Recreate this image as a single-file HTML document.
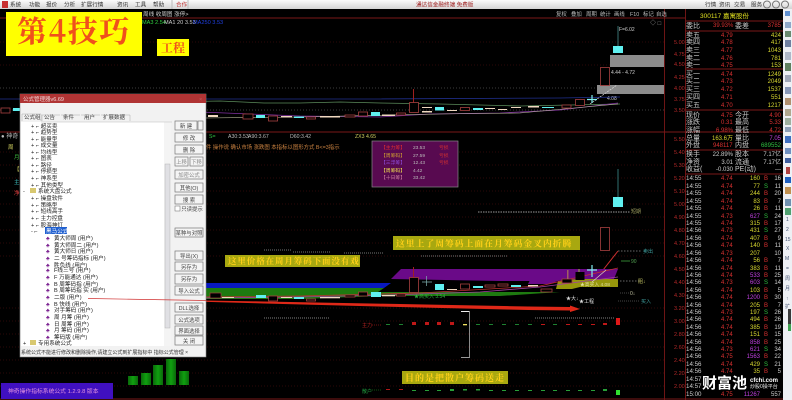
<!DOCTYPE html>
<html lang="zh"><head><meta charset="utf-8"><title>第4技巧</title>
<style>
html,body{margin:0;padding:0;background:#000;width:792px;height:400px;overflow:hidden}
svg{display:block;filter:blur(.35px);font-family:"Liberation Sans","Noto Sans CJK SC",sans-serif;font-size:7px}
.btn{fill:#f4f4f4;stroke:#777;stroke-width:.7}
.grid line{stroke:#5a1010;stroke-width:.6;stroke-dasharray:1 2}
.hollow{fill:#000;stroke:#a84040;stroke-width:.8}
.cy{fill:#60f0f0}
.pale{fill:#f0d8c0}
.se{font-family:"Noto Serif CJK SC",serif}
</style></head><body>
<svg width="792" height="400" viewBox="0 0 792 400" xmlns="http://www.w3.org/2000/svg">
<defs><linearGradient id="mb" x1="0" y1="0" x2="0" y2="1"><stop offset="0" stop-color="#fafafa"/><stop offset="1" stop-color="#d4d4d4"/></linearGradient>
<linearGradient id="gb" x1="0" y1="0" x2="1" y2="0"><stop offset="0" stop-color="#0a6a0a"/><stop offset=".5" stop-color="#10a010"/><stop offset="1" stop-color="#0a6a0a"/></linearGradient></defs>
<rect width="792" height="400" fill="#000"/>
<!-- menu -->
<rect width="792" height="9" fill="url(#mb)"/>
<rect x="2" y="1" width="6" height="7" fill="#c83030"/>
<g fill="#333" font-size="5.600"><text x="10" y="6.500">系统</text><text x="29" y="6.500">功能</text><text x="46" y="6.500">报价</text><text x="64" y="6.500">分析</text><text x="81" y="6.500">扩展行情</text><text x="117" y="6.500">资讯</text><text x="135" y="6.500">工具</text><text x="153" y="6.500">帮助</text></g>
<line x1="172" y1="0" x2="172" y2="9" stroke="#bbb"/><line x1="188" y1="0" x2="188" y2="9" stroke="#bbb"/><text x="176" y="6.500" fill="#c03030" font-size="5.600">合作</text>
<text x="416" y="6.500" fill="#a02020" font-size="5.600">通达信金融终端 免费版</text>
<g fill="#333" font-size="5.600"><text x="705" y="6.500">行情</text><text x="719" y="6.500">资讯</text><text x="734" y="6.500">交易</text><text x="751" y="6.500">服务</text></g>
<circle cx="767" cy="4.500" r="3.500" fill="none" stroke="#777"/><circle cx="776" cy="4.500" r="3.500" fill="none" stroke="#777"/><circle cx="785" cy="4.500" r="3.500" fill="none" stroke="#777"/>
<!-- grid -->
<g class="grid">
<line x1="0" y1="42" x2="664" y2="42"/><line x1="0" y1="65" x2="664" y2="65"/><line x1="0" y1="88" x2="664" y2="88" style="stroke:#777"/><line x1="0" y1="110" x2="664" y2="110" style="stroke:#777"/>
<line x1="0" y1="152" x2="664" y2="152"/><line x1="0" y1="165" x2="664" y2="165"/><line x1="0" y1="178" x2="664" y2="178"/><line x1="0" y1="191" x2="664" y2="191"/><line x1="0" y1="204" x2="664" y2="204"/><line x1="0" y1="217" x2="664" y2="217"/><line x1="0" y1="230" x2="664" y2="230"/><line x1="0" y1="243" x2="664" y2="243"/><line x1="0" y1="256" x2="664" y2="256"/>
<line x1="0" y1="308" x2="664" y2="308"/><line x1="0" y1="321" x2="664" y2="321"/><line x1="0" y1="334" x2="664" y2="334"/><line x1="0" y1="347" x2="664" y2="347"/><line x1="0" y1="360" x2="664" y2="360"/><line x1="0" y1="373" x2="664" y2="373"/><line x1="0" y1="386" x2="664" y2="386"/>
</g>
<!-- panel frame -->
<g stroke="#7a1818" stroke-width=".9" fill="none">
<line x1="0" y1="18" x2="685" y2="18"/><line x1="0" y1="132" x2="783" y2="132"/><line x1="0" y1="399" x2="783" y2="399"/>
<line x1="664.500" y1="9" x2="664.500" y2="400"/><line x1="685.500" y1="9" x2="685.500" y2="400"/>
<line x1="686" y1="21" x2="783" y2="21"/><line x1="686" y1="31" x2="783" y2="31"/><line x1="686" y1="69" x2="783" y2="69"/><line x1="686" y1="110" x2="783" y2="110"/><line x1="686" y1="150" x2="783" y2="150"/><line x1="686" y1="174" x2="783" y2="174"/>
</g>
<!-- top toolbar text -->
<text x="143" y="16" fill="#ccc" font-size="5.600">周线 收周图 涨停&gt;</text>
<g fill="#bbb" font-size="5.400"><text x="556" y="16">复权</text><text x="571" y="16">叠加</text><text x="586" y="16">周期</text><text x="600" y="16">统计</text><text x="614" y="16">画线</text><text x="630" y="16">F10</text><text x="643" y="16">标记</text><text x="656" y="16">自选</text></g>
<g font-size="5.600"><text x="142" y="24" fill="#30d040">MA3 2.54</text><text x="164" y="24" fill="#ccc">MA1 20 3.53</text><text x="193" y="24" fill="#2040e0">MA250 3.53</text></g>
<text x="650" y="25" fill="#999" font-size="6">◇ □</text>
<!-- price axes -->
<g fill="#b02828" font-size="5.500">
<text x="674" y="44">5.00</text><text x="674" y="56">4.75</text><text x="674" y="66">4.50</text><text x="674" y="79">4.25</text><text x="674" y="90">4.00</text><text x="674" y="101">3.75</text><text x="674" y="112">3.50</text>
<text x="674" y="141">5.50</text><text x="674" y="154">5.40</text><text x="674" y="167">5.30</text><text x="674" y="180">5.20</text><text x="674" y="193">5.10</text><text x="674" y="206">5.00</text><text x="674" y="219">4.90</text><text x="674" y="232">4.80</text><text x="674" y="245">4.70</text><text x="674" y="258">4.60</text><text x="674" y="271">4.50</text><text x="674" y="284">4.40</text><text x="674" y="297">4.30</text><text x="674" y="310">3.20</text><text x="674" y="323">3.00</text><text x="674" y="336">2.80</text><text x="674" y="349">2.60</text><text x="674" y="362">2.40</text><text x="674" y="375">2.20</text><text x="674" y="388">2.00</text>
</g>
<!-- top panel chart -->
<rect x="610" y="55" width="54" height="12" fill="#8c8c8c"/><rect x="597" y="85" width="67" height="9" fill="#8c8c8c"/>
<line x1="618" y1="26" x2="618" y2="46" stroke="#50a0a0" stroke-width=".7"/><rect x="613" y="46" width="10" height="7" class="cy"/>
<text x="619" y="31" fill="#ccc" font-size="5">F=6.02</text>
<rect x="600.500" y="67.500" width="9" height="18" class="hollow"/><text x="611" y="74" fill="#ccc" font-size="5">4.44 - 4.72</text>
<line x1="590" y1="104" x2="617" y2="85" stroke="#ddd" stroke-width=".7" stroke-dasharray="2 1"/>
<text x="607" y="100" fill="#ccc" font-size="5">4.08</text>
<polyline points="0,99 60,99 369,99 560,98 620,97" fill="none" stroke="#203090" stroke-width=".8"/>
<polyline points="100,103 220,101 264,103 300,103 340,102 380,103 440,104 520,106 620,104" fill="none" stroke="#5a8a5a" stroke-width=".8"/>
<polyline points="200,112 300,116 380,117 430,114 500,113 560,110 618,103" fill="none" stroke="#8030a0" stroke-width=".8"/>
<polyline points="206,118 300,117 440,114 520,113 618,104" fill="none" stroke="#c0c0a0" stroke-width=".6"/>
<rect x="1" y="108" width="9" height="5" class="hollow"/><rect x="13" y="108" width="8" height="3" class="cy"/>
<rect x="208" y="115" width="10" height="2" class="pale"/><rect x="243" y="114" width="10" height="5" class="hollow"/><rect x="256" y="115" width="9" height="3" class="cy"/>
<rect x="268.500" y="116" width="9" height="5" class="hollow"/><rect x="281" y="116" width="11" height="1.500" class="pale"/><rect x="294" y="116.500" width="10" height="1.500" class="cy"/><rect x="306.500" y="117" width="9" height="2" class="hollow"/>
<rect x="320" y="116" width="20" height="1.500" class="pale"/><rect x="345" y="115" width="10" height="2" class="hollow"/><rect x="358.500" y="112" width="9" height="4" class="hollow"/><rect x="371" y="112" width="9" height="4" class="cy"/><rect x="382" y="114.500" width="13" height="1.500" class="pale"/><rect x="396.500" y="113" width="9" height="2" class="hollow"/>
<line x1="413.500" y1="89" x2="413.500" y2="103" stroke="#a02020"/><rect x="409.500" y="102.500" width="9" height="10" class="hollow"/><rect x="422" y="111" width="10" height="1.500" class="pale"/>
<rect x="422" y="107" width="10" height="1" class="pale"/><rect x="435" y="107" width="9" height="3.500" class="cy"/><rect x="447" y="110" width="10" height="1" class="pale"/><rect x="460.500" y="107.500" width="9" height="3" class="hollow"/><rect x="473" y="108" width="10" height="2" class="cy"/><rect x="485" y="108" width="10" height="1" class="pale"/><rect x="498" y="109" width="9" height="1" class="pale"/><rect x="511" y="107" width="10" height="1" class="pale"/><rect x="528" y="106" width="11" height="1.500" class="pale"/><rect x="542" y="107" width="12" height="1" class="cy"/><rect x="562" y="105" width="9" height="3" class="hollow"/><rect x="575.500" y="99.500" width="9" height="6" class="hollow"/><path d="M592 95V103M587 99.500H597" stroke="#80f0f0" stroke-width="1.200" fill="none"/>
<!-- lower panel header -->
<text x="1" y="138" fill="#bbb" font-size="6">● 神奇</text>
<g font-size="5.200"><text x="209" y="138" fill="#30c040">S=</text><text x="228" y="138" fill="#bbb">A30:3.53</text><text x="248" y="138" fill="#bbb">A90:3.67</text><text x="290" y="138" fill="#bbb">D60:3.42</text><text x="355" y="138" fill="#d0d060">ZX3 4.65</text></g>
<g font-size="5.500"><text x="8" y="149" fill="#d0d060">周</text><text x="14" y="159" fill="#40c040">月</text><text x="14" y="171" fill="#d0d060">【</text><text x="14" y="184" fill="#40c0c0">主</text><text x="14" y="195" fill="#e04040">净</text></g>
<text x="206" y="149" fill="#c88040" font-size="5.400">件 操作说 确认市场 涨跌图 本指标以图形方式 B&lt;=3指示</text>
<!-- purple info box -->
<rect x="372" y="141" width="86" height="46" fill="#580a50" stroke="#888" stroke-width=".7"/>
<g font-size="4.800"><text x="381" y="149" fill="#e03030">【主力筹】</text><text x="413" y="149" fill="#bbb">23.53</text><text x="439" y="149" fill="#d03030">亏损</text>
<text x="381" y="157" fill="#d0a030">【周筹码】</text><text x="413" y="157" fill="#bbb">27.59</text><text x="439" y="157" fill="#d03030">亏损</text>
<text x="381" y="164" fill="#9050e0">【三浮筹】</text><text x="413" y="164" fill="#bbb">12.43</text><text x="439" y="164" fill="#d03030">亏损</text>
<text x="381" y="172" fill="#f0e050">【周筹码】</text><text x="413" y="172" fill="#bbb">4.42</text>
<text x="381" y="179" fill="#d080a0">【十日筹】</text><text x="413" y="179" fill="#bbb">33.42</text></g>
<!-- lower chart -->
<line x1="618" y1="169" x2="618" y2="197" stroke="#307070"/><rect x="613" y="197" width="10" height="10" class="cy"/>
<rect x="600.500" y="227.500" width="9" height="23" class="hollow"/>
<line x1="478" y1="212" x2="630" y2="212" stroke="#ccc" stroke-width=".7" stroke-dasharray="1.500 1"/><text x="631" y="213" fill="#a0a060" font-size="5">短期</text>
<path d="M264 250H292M293 252H330M344 253H384M421 256H460M460 256H508" stroke="#999" stroke-width=".7" stroke-dasharray="1 1" fill="none"/>
<line x1="618" y1="251" x2="642" y2="251" stroke="#ccc" stroke-width=".6" stroke-dasharray="1.500 1.500"/><text x="643" y="253" fill="#40a0a0" font-size="5">卖出</text>
<line x1="621" y1="261" x2="630" y2="261" stroke="#308030"/><text x="631" y="263" fill="#50a050" font-size="5">90</text>
<line x1="592" y1="284" x2="618" y2="251" stroke="#d03030" stroke-width="1"/>
<!-- colour bands -->
<path d="M200 283H391L384 288H200Z" fill="#0818c0"/>
<path d="M200 288H384L378 292H560L500 296H380L300 299H200Z" fill="#1e7a10"/>
<path d="M391 279L401 269H618L614 279H580L556 281H500Z" fill="#6a0a88"/>
<path d="M558 281L578 279H618V287H580L572 289H556Z" fill="#96960c"/>
<path d="M530 280H560L550 284H528Z" fill="#6a0a88"/>
<polyline points="200,298 300,297 390,295 480,292 540,287 618,277" fill="none" stroke="#a040a0" stroke-width=".8"/>
<polyline points="200,297 300,296 420,293 540,286 618,268" fill="none" stroke="#c03030" stroke-width=".7"/>
<rect x="210" y="293" width="11" height="5" fill="#000" stroke="#a84040" stroke-width=".7"/>
<rect x="222" y="297" width="12" height="1" class="pale"/><rect x="256" y="295" width="10" height="3" class="cy"/>
<rect x="268.500" y="296" width="9" height="5" class="hollow"/><rect x="281" y="297" width="11" height="1" class="pale"/><rect x="294" y="297" width="10" height="2" class="cy"/><rect x="306.500" y="299" width="9" height="2" class="hollow"/><rect x="320" y="297" width="20" height="1.300" class="pale"/><rect x="345" y="295" width="10" height="2" class="hollow"/><rect x="358.500" y="292" width="9" height="4" class="hollow"/><rect x="371" y="292" width="10" height="5" class="cy"/><rect x="382" y="295" width="13" height="1.300" class="pale"/><rect x="396.500" y="294" width="9" height="2" class="hollow"/>
<line x1="413.500" y1="267" x2="413.500" y2="278" stroke="#a02020"/><rect x="409.500" y="277.500" width="9" height="15" class="hollow"/>
<path d="M426.500 276V286M422 282H432" stroke="#80b0b0" stroke-width=".7" fill="none"/><rect x="435" y="284" width="9" height="6" class="cy"/><rect x="447" y="289" width="10" height="1" class="pale"/><rect x="460.500" y="284" width="9" height="5" class="hollow"/><rect x="473" y="286" width="10" height="2" class="cy"/><rect x="485" y="285" width="10" height="2" class="hollow"/><rect x="498" y="284" width="10" height="2" class="hollow"/><rect x="511" y="285" width="10" height="2" class="cy"/><rect x="528" y="285" width="10" height="1.500" class="pale"/><rect x="541" y="289" width="11" height="3" class="hollow"/><rect x="562" y="279" width="10" height="4" class="hollow"/><rect x="567" y="270" width="1.500" height="9" fill="#a06060"/><rect x="575.500" y="272" width="9" height="8" fill="#000"/><rect x="578" y="269" width="2" height="3" fill="#806060"/><path d="M592 265V277M587 270H597" stroke="#80f0f0" stroke-width="1.200" fill="none"/>
<line x1="592" y1="282" x2="606" y2="270" stroke="#e0e0c0" stroke-width=".6"/>
<text x="414" y="298" fill="#30b040" font-size="5">★高买入 3.54</text>
<text x="580" y="286" fill="#e0e0a0" font-size="4.800">★高买入 4.08</text>
<text x="566" y="300" fill="#ddd" font-size="5">★大↓</text><text x="579" y="303" fill="#ddd" font-size="5">★工程</text>
<line x1="620" y1="281" x2="640" y2="281" stroke="#ccc" stroke-width=".6" stroke-dasharray="1.500 1.500"/><text x="638" y="283" fill="#c0c060" font-size="5">阻↓</text>
<line x1="620" y1="293" x2="630" y2="293" stroke="#888" stroke-width=".6" stroke-dasharray="1 1"/><text x="630" y="295" fill="#c0c0a0" font-size="5">0↓</text>
<line x1="618" y1="301" x2="640" y2="301" stroke="#888" stroke-width=".6" stroke-dasharray="1 1"/><text x="641" y="303" fill="#40a0a0" font-size="5">买入</text>
<!-- red arrow -->
<path d="M88 298.500L264 301.500L400 304L528 306.500L570 307V305.500L580 309L570 312V310.500L528 310L400 307L264 303.500Z" fill="#e02818"/>
<!-- signal rows -->
<line x1="264" y1="318" x2="330" y2="318" stroke="#aaa" stroke-width=".8" stroke-dasharray="1 1"/>
<line x1="535" y1="318" x2="615" y2="318" stroke="#aaa" stroke-width=".7" stroke-dasharray="1 1"/>
<text x="362" y="327" fill="#b02020" font-size="5">主力</text><line x1="372" y1="325" x2="382" y2="325" stroke="#701010" stroke-dasharray="1 1"/>
<path d="M461 311.500H469.500V357.500H461" fill="none" stroke="#999" stroke-width=".9"/><line x1="461" y1="311.500" x2="469" y2="311.500" stroke="#eee"/>
<g fill="#1e8030"><rect x="386" y="324" width="4" height="1"/><rect x="399" y="324" width="4" height="1"/><rect x="476" y="324" width="4" height="1"/><rect x="489" y="324" width="4" height="1"/><rect x="502" y="324" width="4" height="1"/><rect x="515" y="324" width="4" height="1"/><rect x="528" y="324" width="4" height="1"/><rect x="553" y="324" width="4" height="1"/></g>
<g fill="#c01818"><rect x="412" y="322" width="4" height="3"/><rect x="425" y="322" width="4" height="3"/><rect x="437" y="322" width="4" height="3"/><rect x="450" y="322" width="4" height="3"/><rect x="541" y="324" width="4" height="1"/><rect x="566" y="324" width="4" height="1"/><rect x="578" y="324" width="4" height="1"/><rect x="591" y="324" width="4" height="1"/><rect x="603" y="323" width="4" height="2"/><rect x="616" y="318" width="4" height="7" fill="#e01818"/></g>
<rect x="463" y="324" width="4" height="1.300" fill="#f0e060"/>
<text x="362" y="393" fill="#20a040" font-size="5">散户</text><line x1="372" y1="390" x2="382" y2="390" stroke="#105010" stroke-dasharray="1 1"/>
<g fill="#b01818"><rect x="386" y="389" width="4" height="1"/><rect x="399" y="389" width="4" height="1"/></g>
<g fill="#28a038"><rect x="412" y="390" width="4" height="1"/><rect x="425" y="390" width="4" height="1"/><rect x="437" y="390" width="4" height="1"/><rect x="450" y="389" width="4" height="2"/><rect x="463" y="389" width="4" height="1.500"/><rect x="476" y="389" width="4" height="1.500"/><rect x="489" y="390" width="4" height="1"/><rect x="502" y="390" width="4" height="1"/><rect x="515" y="390" width="4" height="1"/><rect x="528" y="390" width="4" height="1"/><rect x="541" y="390" width="4" height="1"/><rect x="553" y="390" width="4" height="1"/><rect x="566" y="390" width="4" height="1"/><rect x="578" y="390" width="4" height="1"/><rect x="591" y="390" width="4" height="1"/><rect x="603" y="389" width="4" height="2"/><rect x="616" y="390" width="4" height="5" fill="#30e030"/></g>
<!-- yellow labels -->
<rect x="225" y="255" width="135" height="12" fill="#a8a810"/>
<text x="228" y="264" fill="#ffd018" font-size="8.500" font-weight="700" letter-spacing=".9" class="se">这里价格在周月筹码下面没有戏</text>
<rect x="393" y="236" width="187" height="14" fill="#a8a810"/>
<text x="396" y="246.500" fill="#ffd018" font-size="8.800" font-weight="700" letter-spacing="1" class="se">这里上了周筹码上面在月筹码金叉内折腾</text>
<rect x="402" y="371" width="106" height="13" fill="#a8a810"/>
<text x="405" y="381" fill="#ffd018" font-size="9" font-weight="700" letter-spacing="1" class="se">目的是把散户筹码送走</text>
<!-- yellow title -->
<rect x="6" y="12" width="136" height="44" fill="#ffff00"/>
<text x="17" y="42" fill="#f0501c" font-size="30" font-weight="700" class="se" letter-spacing="1.500">第4技巧</text>
<rect x="157" y="39" width="32" height="17" fill="#ffff00"/>
<text x="161" y="52" fill="#f0501c" font-size="12" font-weight="700" class="se">工程</text>
<!-- green bars -->
<rect x="128" y="376" width="10" height="9" fill="url(#gb)"/><rect x="141" y="373" width="10" height="12" fill="url(#gb)"/><rect x="153" y="365" width="10" height="20" fill="url(#gb)"/><rect x="166" y="359" width="10" height="26" fill="url(#gb)"/><rect x="179" y="371" width="10" height="14" fill="url(#gb)"/>
<!-- bottom left -->
<rect x="1" y="383" width="112" height="16" fill="#4010c0"/>
<text x="8" y="393" fill="#e090e0" font-size="5.800">神奇操作指标系统公式 1.2.9.8 版本</text>
<!-- right panel -->
<text x="700" y="18" fill="#e0e020" font-size="6.500">300117 嘉寓股份</text>
<g fill="#ccc" font-size="7"><text x="686" y="28">委比</text><text x="686" y="37">卖五</text><text x="686" y="44">卖四</text><text x="686" y="52">卖三</text><text x="686" y="60">卖二</text><text x="686" y="67">卖一</text><text x="686" y="76">买一</text><text x="686" y="83">买二</text><text x="686" y="91">买三</text><text x="686" y="99">买四</text><text x="686" y="107">买五</text><text x="686" y="117">现价</text><text x="686" y="124">涨跌</text><text x="686" y="132">涨幅</text><text x="686" y="140">总量</text><text x="686" y="147">外盘</text><text x="686" y="156">换手</text><text x="686" y="164">净资</text><text x="686" y="171">收益(</text>
<text x="735" y="28">委差</text><text x="735" y="117">今开</text><text x="735" y="124">最高</text><text x="735" y="132">最低</text><text x="735" y="140">量比</text><text x="735" y="147">内盘</text><text x="735" y="156">股本</text><text x="735" y="164">流通</text><text x="735" y="171">PE(动)</text></g>
<g fill="#d83030" font-size="6"><text x="713" y="27">39.93%</text><text x="721" y="37">4.79</text><text x="721" y="44">4.78</text><text x="721" y="52">4.77</text><text x="721" y="60">4.76</text><text x="721" y="67">4.75</text><text x="721" y="76">4.74</text><text x="721" y="83">4.73</text><text x="721" y="91">4.72</text><text x="721" y="99">4.71</text><text x="721" y="107">4.70</text><text x="721" y="117">4.75</text><text x="721" y="124">0.31</text><text x="716" y="132">6.98%</text><text x="713" y="147">948117</text>
<g text-anchor="end"><text x="781" y="27">3785</text><text x="781" y="117">4.90</text><text x="781" y="124">5.33</text><text x="781" y="132">4.72</text></g></g>
<g fill="#d8d830" font-size="6"><g text-anchor="end"><text x="781" y="37">424</text><text x="781" y="44">417</text><text x="781" y="52">1043</text><text x="781" y="60">781</text><text x="781" y="67">153</text><text x="781" y="76">1249</text><text x="781" y="83">2049</text><text x="781" y="91">1537</text><text x="781" y="99">551</text><text x="781" y="107">1217</text></g><text x="712" y="140">163.6万</text></g>
<g font-size="6" text-anchor="end"><text x="781" y="140" fill="#c040e0">7.05</text><text x="781" y="147" fill="#30c040">689552</text>
<g fill="#ccc"><text x="781" y="156">7.17亿</text><text x="781" y="164">7.17亿</text><text x="781" y="171">—</text><text x="733" y="156">22.89%</text><text x="733" y="164">3.01</text><text x="733" y="171">-0.030</text></g></g>
<!-- ticks -->
<g fill="#ccc" font-size="6.200">
<text x="686" y="180">14:55</text><text x="686" y="188">14:55</text><text x="686" y="195">14:55</text><text x="686" y="203">14:55</text><text x="686" y="210">14:55</text><text x="686" y="218">14:55</text><text x="686" y="225">14:55</text><text x="686" y="232">14:56</text><text x="686" y="240">14:56</text><text x="686" y="247">14:56</text><text x="686" y="255">14:56</text><text x="686" y="262">14:56</text><text x="686" y="270">14:56</text><text x="686" y="277">14:56</text><text x="686" y="284">14:56</text><text x="686" y="292">14:56</text><text x="686" y="299">14:56</text><text x="686" y="307">14:56</text><text x="686" y="314">14:56</text><text x="686" y="321">14:56</text><text x="686" y="329">14:56</text><text x="686" y="336">14:56</text><text x="686" y="344">14:56</text><text x="686" y="351">14:56</text><text x="686" y="358">14:56</text><text x="686" y="366">14:56</text><text x="686" y="373">14:56</text><text x="686" y="381">14:57</text><text x="686" y="388">14:57</text><text x="686" y="396">15:00</text>
</g>
<g fill="#d83030" font-size="6">
<text x="721" y="180">4.74</text><text x="721" y="188">4.74</text><text x="721" y="195">4.74</text><text x="721" y="203">4.74</text><text x="721" y="210">4.74</text><text x="721" y="218">4.73</text><text x="721" y="225">4.74</text><text x="721" y="232">4.73</text><text x="721" y="240">4.74</text><text x="721" y="247">4.74</text><text x="721" y="255">4.73</text><text x="721" y="262">4.74</text><text x="721" y="270">4.74</text><text x="721" y="277">4.74</text><text x="721" y="284">4.73</text><text x="721" y="292">4.74</text><text x="721" y="299">4.74</text><text x="721" y="307">4.74</text><text x="721" y="314">4.73</text><text x="721" y="321">4.74</text><text x="721" y="329">4.74</text><text x="721" y="336">4.74</text><text x="721" y="344">4.74</text><text x="721" y="351">4.73</text><text x="721" y="358">4.75</text><text x="721" y="366">4.74</text><text x="721" y="373">4.74</text><text x="721" y="396">4.75</text>
</g>
<g fill="#d8d830" font-size="6" text-anchor="end">
<text x="760" y="180">160</text><text x="760" y="188">77</text><text x="760" y="195">244</text><text x="760" y="203">83</text><text x="760" y="210">26</text><text x="760" y="218" fill="#c040e0">627</text><text x="760" y="225">315</text><text x="760" y="232">431</text><text x="760" y="240">407</text><text x="760" y="247">140</text><text x="760" y="255">207</text><text x="760" y="262">56</text>
<text x="760" y="270">383</text><text x="760" y="277" fill="#c040e0">533</text><text x="760" y="284" fill="#c040e0">603</text><text x="760" y="292">103</text><text x="760" y="299" fill="#c040e0">1200</text><text x="760" y="307">205</text><text x="760" y="314">197</text><text x="760" y="321">494</text><text x="760" y="329">385</text><text x="760" y="336">151</text><text x="760" y="344" fill="#c040e0">858</text><text x="760" y="351" fill="#c040e0">621</text><text x="760" y="358" fill="#c040e0">1563</text><text x="760" y="366">429</text><text x="760" y="373">35</text><text x="760" y="396" fill="#c040e0">11267</text>
</g>
<g font-size="6">
<g fill="#d83030"><text x="764" y="180">B</text><text x="764" y="195">B</text><text x="764" y="203">B</text><text x="764" y="210">B</text><text x="764" y="225">B</text><text x="764" y="240">B</text><text x="764" y="247">B</text><text x="764" y="262">B</text><text x="764" y="270">B</text><text x="764" y="277">B</text><text x="764" y="292">B</text><text x="764" y="299">B</text><text x="764" y="307">B</text><text x="764" y="321">B</text><text x="764" y="329">B</text><text x="764" y="336">B</text><text x="764" y="344">B</text><text x="764" y="358">B</text><text x="764" y="373">B</text></g>
<g fill="#30c040"><text x="764" y="188">S</text><text x="764" y="218">S</text><text x="764" y="232">S</text><text x="764" y="284">S</text><text x="764" y="314">S</text><text x="764" y="351">S</text><text x="764" y="366">S</text></g>
<g fill="#ccc" text-anchor="end"><text x="781" y="180">16</text><text x="781" y="188">11</text><text x="781" y="195">20</text><text x="781" y="203">7</text><text x="781" y="210">11</text><text x="781" y="218">24</text><text x="781" y="225">17</text><text x="781" y="232">27</text><text x="781" y="240">9</text><text x="781" y="247">11</text><text x="781" y="255">10</text><text x="781" y="262">7</text><text x="781" y="270">11</text><text x="781" y="277">25</text><text x="781" y="284">14</text><text x="781" y="292">5</text><text x="781" y="299">30</text><text x="781" y="307">7</text><text x="781" y="314">26</text><text x="781" y="321">26</text><text x="781" y="329">19</text><text x="781" y="336">15</text><text x="781" y="344">25</text><text x="781" y="351">34</text><text x="781" y="358">22</text><text x="781" y="366">21</text><text x="781" y="373">5</text><text x="781" y="396">557</text></g>
</g>
<!-- watermark -->
<text x="702" y="388" fill="#fff" font-size="15" font-weight="700">财富池</text>
<text x="750" y="382" fill="#fff" font-size="6" font-weight="700">cfchi.com</text>
<text x="750" y="388" fill="#eee" font-size="5">炒股0操平台</text>
<!-- right sidebar -->
<rect x="783" y="9" width="9" height="391" fill="#eef0f4"/>
<rect x="785" y="11" width="5" height="5" fill="#6090d0"/><rect x="785" y="22" width="6" height="6" fill="#90a8c8"/><rect x="785" y="31" width="6" height="6" fill="#6a8a70"/><rect x="785" y="40" width="6" height="7" fill="#7080a0"/><rect x="785" y="52" width="6" height="8" fill="#b0b8c8"/><rect x="785" y="63" width="6" height="8" fill="#608060"/><rect x="785" y="75" width="6" height="7" fill="#a0a8b8"/><rect x="785" y="87" width="6" height="7" fill="#8898b8"/><rect x="785" y="98" width="6" height="7" fill="#b09070"/><rect x="785" y="109" width="6" height="7" fill="#b0a890"/><rect x="785" y="118" width="6" height="7" fill="#a0b0a0"/><rect x="785" y="127" width="6" height="5" fill="#90a0b8"/>
<rect x="785" y="136" width="6" height="7" fill="#4070c0"/><rect x="785" y="148" width="6" height="6" fill="#7090c0"/><rect x="785" y="158" width="6" height="5" fill="#4060a0"/><rect x="786" y="167" width="4" height="7" fill="#b04040"/><rect x="785" y="177" width="6" height="6" fill="#2060c0"/><rect x="785" y="187" width="6" height="7" fill="#c09050"/><rect x="785" y="199" width="6" height="7" fill="#7090b0"/><rect x="785" y="208" width="6" height="7" fill="#50a070"/>
<g fill="#405070" font-size="5"><text x="786" y="221">1</text><text x="786" y="231">2</text><text x="785" y="241">15</text><text x="786" y="250">X</text><text x="785" y="260">M</text><text x="786" y="270">=</text><text x="785" y="280">周</text><text x="785" y="290">月</text><text x="786" y="300">↑</text><text x="785" y="308">扩</text></g>
<rect x="788" y="309" width="3" height="21" fill="#3a3a3a"/><rect x="788" y="324" width="3" height="7" fill="#40a050"/>
<!-- dialog -->
<rect x="20" y="94" width="186" height="263" fill="#f2f2f2" stroke="#888" stroke-width=".6"/>
<rect x="20" y="94" width="186" height="9" fill="#b03434"/>
<text x="23" y="101" fill="#f0d8d8" font-size="5.500">公式管理器v6.69</text><text x="199" y="101" fill="#c06060" font-size="5.500">×</text>
<rect x="21" y="122" width="145" height="224" fill="#fff"/>
<rect x="164" y="122" width="7" height="224" fill="#f4f4f4"/><rect x="165" y="164" width="5" height="164" fill="#e0e0e4" stroke="#aaa" stroke-width=".4"/>
<g fill="#333" font-size="5.500"><text x="24" y="119">公式组</text><text x="44" y="119">公告</text><text x="63" y="119">条件</text><text x="84" y="119">用户</text><text x="103" y="119">扩展数据</text></g>
<path d="M22 121V114H41V121M42 121V115H60M61 115H80M81 115H100M101 115H130V121" fill="none" stroke="#aaa" stroke-width=".5"/>
<line x1="41" y1="122" x2="172" y2="122" stroke="#bbb" stroke-width=".5"/>
<g fill="#222" font-size="5.600">
<text x="31" y="128">+ ⌐ 超买卖</text><text x="31" y="134">+ ⌐ 趋势型</text><text x="31" y="141">+ ⌐ 能量型</text><text x="31" y="147">+ ⌐ 成交量</text><text x="31" y="154">+ ⌐ 均线型</text><text x="31" y="160">+ ⌐ 图表</text><text x="31" y="167">+ ⌐ 路径</text><text x="31" y="173">+ ⌐ 停损型</text><text x="31" y="180">+ ⌐ 神系型</text><text x="31" y="187">+ ⌐ 其他类型</text>
<text x="23" y="193">-</text><rect x="30" y="188" width="6" height="5" fill="#d8c870"/><text x="38" y="193">系统大盘公式</text>
<text x="31" y="200">+ ⌐ 操盘软件</text><text x="31" y="207">+ ⌐ 策略型</text><text x="31" y="213">+ ⌐ 短线高手</text><text x="31" y="220">+ ⌐ 主力控盘</text><text x="31" y="227">+ ⌐ 股海神灯</text><text x="31" y="233">- ⌐</text>
<rect x="45" y="227" width="22" height="7" fill="#2060d0"/><text x="46" y="233" fill="#fff">黑马公式</text>
<g fill="#7a2090"><text x="46" y="240">♣</text><text x="46" y="247">♣</text><text x="46" y="253">♣</text><text x="46" y="260">♣</text><text x="46" y="267">♣</text><text x="46" y="272">♣</text><text x="46" y="279">♣</text><text x="46" y="286">♣</text><text x="46" y="292">♣</text><text x="46" y="299">♣</text><text x="46" y="306">♣</text><text x="46" y="312">♣</text><text x="46" y="319">♣</text><text x="46" y="326">♣</text><text x="46" y="332">♣</text><text x="46" y="339">♣</text></g>
<text x="54" y="240">黄大师周 (用户)</text><text x="54" y="247">黄大师周二 (用户)</text><text x="54" y="253">黄大师日 (用户)</text><text x="54" y="260">二 号筹码指标 (用户)</text><text x="54" y="267">胜负线 (用户)</text><text x="54" y="272">F线三号 (用户)</text><text x="54" y="279">F 万能通达 (用户)</text><text x="54" y="286">B 周筹码指 (用户)</text><text x="54" y="292">B 周筹码指 实 (用户)</text><text x="54" y="299">二版 (用户)</text><text x="54" y="306">B 快线 (用户)</text><text x="54" y="312">对手筹码 (用户)</text><text x="54" y="319">周 月筹 (用户)</text><text x="54" y="326">日 周筹 (用户)</text><text x="54" y="332">月 筹码 (用户)</text><text x="54" y="339">筹码版 (用户)</text>
<text x="23" y="345">+</text><rect x="30" y="340" width="6" height="5" fill="#d8c870"/><text x="38" y="345">专用系统公式</text>
</g>
<!-- red line across dialog -->
<line x1="88" y1="298.500" x2="206" y2="300.500" stroke="#d03030" stroke-width=".7"/>
<!-- buttons -->
<rect class="btn" x="175" y="121" width="22" height="9"/><rect class="btn" x="198" y="121" width="5" height="9"/>
<rect class="btn" x="175" y="133" width="28" height="9"/><rect class="btn" x="175" y="145" width="28" height="9"/><rect class="btn" x="175" y="157" width="13" height="9"/><rect class="btn" x="190" y="157" width="13" height="9"/><rect class="btn" x="175" y="170" width="28" height="9"/><rect class="btn" x="175" y="183" width="28" height="9"/><rect class="btn" x="175" y="195" width="28" height="9"/>
<rect x="175" y="206" width="5" height="5" fill="#fff" stroke="#666" stroke-width=".5"/>
<rect class="btn" x="175" y="228" width="28" height="9"/><rect class="btn" x="175" y="251" width="28" height="9"/><rect class="btn" x="175" y="262" width="28" height="9"/><rect class="btn" x="175" y="274" width="28" height="10"/><rect class="btn" x="175" y="286" width="28" height="9"/><rect class="btn" x="175" y="303" width="28" height="9"/><rect class="btn" x="175" y="315" width="28" height="9"/><rect class="btn" x="175" y="326" width="28" height="9"/><rect class="btn" x="175" y="336" width="28" height="9"/>
<g fill="#444" font-size="5.400" text-anchor="middle">
<text x="186" y="128">新 建</text><text x="189" y="140">修 改</text><text x="189" y="152">删 除</text><text x="181.500" y="164" fill="#888">上移</text><text x="196.500" y="164" fill="#888">下移</text><text x="189" y="177" fill="#888">加密公式</text><text x="189" y="190">其他(O)</text><text x="189" y="202">搜 索</text><text x="192" y="211">只读提示</text><text x="189" y="235">某种与对照</text><text x="189" y="258">导出(X)</text><text x="189" y="269">另存为</text><text x="189" y="281">另存为</text><text x="189" y="293">导入公式</text><text x="189" y="310">DLL选择</text><text x="189" y="322">公式选项</text><text x="189" y="333">界面选择</text><text x="189" y="343">关 闭</text>
</g>
<text x="21" y="354" fill="#333" font-size="5">系统公式不能进行修改和删除操作,请建立公式到扩展指标中 指标公式管理 ×</text>
</svg>
</body></html>
